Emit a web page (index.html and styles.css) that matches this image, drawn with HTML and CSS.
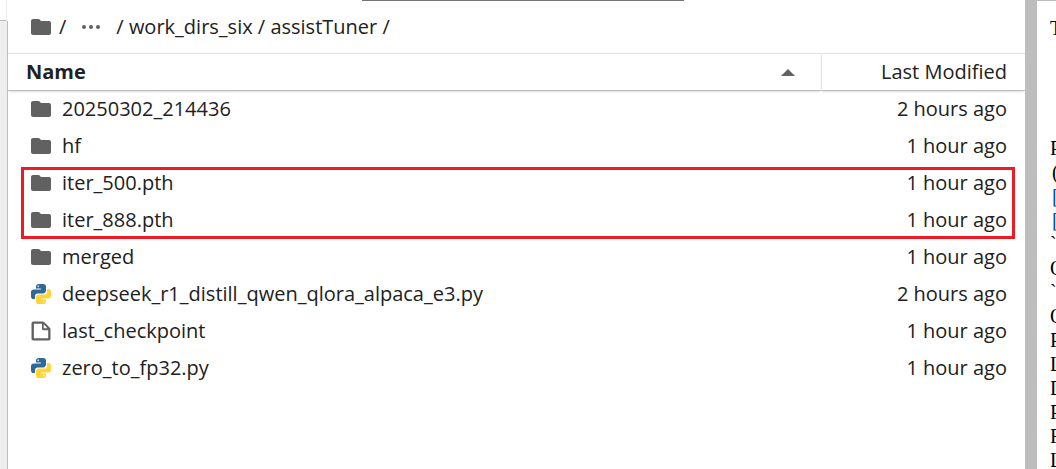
FILE: index.html
```
<!DOCTYPE html>
<html lang="en">
<head>
<meta charset="utf-8">
<title>assistTuner</title>
<link rel="stylesheet" href="styles.css">
</head>
<body>
<svg class="sprite" aria-hidden="true">
  <symbol id="folder" viewBox="0 0 24 24"><path fill="#616161" d="M10 4H4c-1.1 0-1.99.9-1.99 2L2 18c0 1.1.9 2 2 2h16c1.1 0 2-.9 2-2V8c0-1.1-.9-2-2-2h-8l-2-2z"/></symbol>
  <symbol id="file" viewBox="0 0 22 22"><path fill="#616161" d="M19.3 8.2l-5.5-5.5c-.3-.3-.7-.5-1.2-.5H3.9c-.8.1-1.6.9-1.6 1.8v14.1c0 .9.7 1.6 1.6 1.6h14.2c.9 0 1.6-.7 1.6-1.6V9.4c.1-.5-.1-.9-.4-1.2zm-5.8-3.3l3.4 3.6h-3.4V4.9zm3.9 12.7H4.7c-.1 0-.2 0-.2-.2V4.7c0-.2.1-.3.2-.3h7.2v4.4s0 .8.3 1.1c.3.3 1.1.3 1.1.3h4.3v7.2s-.1.2-.2.2z"/></symbol>
  <symbol id="python" viewBox="0 0 24 24">
    <path fill="#306998" d="M9.86 2A2.86 2.86 0 0 0 7 4.86v1.68h4.29c.39 0 .71.57.71.96H4.86A2.86 2.86 0 0 0 2 10.36v3.781a2.86 2.86 0 0 0 2.86 2.86h1.18v-2.68a2.85 2.85 0 0 1 2.85-2.86h5.25c1.58 0 2.86-1.271 2.86-2.851V4.86A2.86 2.86 0 0 0 14.14 2zm-.72 1.61c.4 0 .72.12.72.71s-.32.891-.72.891c-.39 0-.71-.3-.71-.89s.32-.711.71-.711z"/>
    <path fill="#ffd43b" d="M17.959 7v2.68a2.85 2.85 0 0 1-2.85 2.859H9.86A2.85 2.85 0 0 0 7 15.389v3.75a2.86 2.86 0 0 0 2.86 2.86h4.28A2.86 2.86 0 0 0 17 19.14v-1.68h-4.291c-.39 0-.709-.57-.709-.96h7.14A2.86 2.86 0 0 0 22 13.64V9.86A2.86 2.86 0 0 0 19.14 7zm-3.099 11.789c.39 0 .71.3.71.89a.71.71 0 0 1-.71.71c-.4 0-.72-.12-.72-.71s.32-.89.72-.89z"/>
  </symbol>
</svg>
<div class="app">
  <aside class="rail"><div class="rail-top"></div><div class="rail-body"></div></aside>
  <main class="browser">
    <div class="scrollbar"></div>
    <nav class="crumbs" aria-label="Path">
      <a class="crumb-icon" href="#" aria-label="Root"><svg class="icon"><use href="#folder"/></svg></a>
      <span class="root-slash">/</span>
      <button class="more" type="button" aria-label="Show hidden folders"><svg class="dots" viewBox="0 0 20 6"><g fill="#616161"><circle cx="3" cy="3" r="2"/><circle cx="10" cy="3" r="2"/><circle cx="17" cy="3" r="2"/></g></svg></button>
      <span>/ <a href="#">work_dirs_six</a> / <a href="#">assistTuner</a> /</span>
    </nav>
    <div class="listing">
      <table class="files">
        <thead>
          <tr>
            <th class="name-head"><button class="sort" type="button"><span>Name</span><svg class="caret" viewBox="0 0 14 7"><path fill="#616161" d="M0 7 7 0l7 7z"/></svg></button></th>
            <th class="date-head"><button class="sort date" type="button">Last Modified</button></th>
          </tr>
        </thead>
        <tbody>
          <tr><td><a class="entry" href="#"><svg class="icon"><use href="#folder"/></svg>20250302_214436</a></td><td class="date">2 hours ago</td></tr>
          <tr><td><a class="entry" href="#"><svg class="icon"><use href="#folder"/></svg>hf</a></td><td class="date">1 hour ago</td></tr>
          <tr><td><a class="entry" href="#"><svg class="icon"><use href="#folder"/></svg>iter_500.pth</a></td><td class="date">1 hour ago</td></tr>
          <tr><td><a class="entry" href="#"><svg class="icon"><use href="#folder"/></svg>iter_888.pth</a></td><td class="date">1 hour ago</td></tr>
          <tr><td><a class="entry" href="#"><svg class="icon"><use href="#folder"/></svg>merged</a></td><td class="date">1 hour ago</td></tr>
          <tr><td><a class="entry" href="#"><svg class="icon"><use href="#python"/></svg>deepseek_r1_distill_qwen_qlora_alpaca_e3.py</a></td><td class="date">2 hours ago</td></tr>
          <tr><td><a class="entry" href="#"><svg class="icon"><use href="#file"/></svg>last_checkpoint</a></td><td class="date">1 hour ago</td></tr>
          <tr><td><a class="entry" href="#"><svg class="icon"><use href="#python"/></svg>zero_to_fp32.py</a></td><td class="date">1 hour ago</td></tr>
        </tbody>
      </table>
      <div class="highlight"></div>
    </div>
  </main>
  <div class="splitter"></div>
  <section class="output">
<pre class="log">T




P
<span class="mark">(</span>
<span class="mark link">[</span>
<span class="mark link">[</span>
`
O
`
O
P
L
D
P
R
L</pre>
  </section>
</div>
</body>
</html>
```

FILE: styles.css
```
* { box-sizing: border-box; }

body {
  margin: 0;
  background: #fff;
  color: #212121;
  font: 20px/36px "Open Sans", "Noto Sans", sans-serif;
}

a { color: inherit; text-decoration: none; }

button {
  padding: 0;
  border: 0;
  background: none;
  color: inherit;
  font: inherit;
}

.sprite { position: absolute; width: 0; height: 0; }

.app {
  display: flex;
  height: 100vh;
  overflow: hidden;
}

.rail {
  display: flex;
  flex: 0 0 8px;
  flex-direction: column;
}

.rail-top {
  height: 21px;
  margin-right: 1px;
  border-right: 1px solid #eee;
  border-bottom: 1px solid #bdbdbd;
}

.rail-body {
  flex: 1;
  border-right: 1px solid #bdbdbd;
  background: #eee;
}

.browser { flex: 1; min-width: 0; }

.scrollbar {
  width: 322px;
  height: 1px;
  margin-left: 354px;
  background: #757575;
}

.crumbs {
  display: flex;
  align-items: center;
  height: 53px;
  padding-left: 21px;
  border-bottom: 1px solid #e0e0e0;
  white-space: nowrap;
}

.icon { display: block; flex: none; width: 24px; height: 24px; }

.root-slash { margin-left: 6px; }

.more { display: flex; margin: 0 15px; }

.dots { width: 20px; height: 6px; }

.listing { position: relative; }

.files {
  width: 100%;
  border-collapse: separate;
  border-spacing: 0;
  table-layout: fixed;
}

.files th, .files td { height: 37px; padding: 0; }

.files td { vertical-align: top; }

.files thead th {
  border-bottom: 1px solid #bdbdbd;
  box-shadow: 0 2px 2px -1px #ddd;
  font-weight: 400;
}

.date-head { width: 204px; }

.sort {
  display: flex;
  align-items: center;
  justify-content: space-between;
  width: 100%;
  padding: 0 26px 0 18px;
  font-weight: 700;
}

.sort.date {
  justify-content: flex-end;
  height: 34px;
  padding: 0 18px 0 0;
  border-left: 1px solid #e0e0e0;
  font-weight: 400;
}

.caret { width: 14px; height: 7px; }

.entry {
  display: flex;
  align-items: center;
  gap: 9px;
  padding-left: 21px;
}

td.date { padding-right: 18px; text-align: right; }

.highlight {
  position: absolute;
  top: 113px;
  right: 10px;
  left: 13px;
  height: 72px;
  border: 3px solid #ed1c24;
}

.splitter { flex: 0 0 12px; background: #bdbdbd; }

.output {
  flex: 0 0 19px;
  overflow: hidden;
  padding: 15px 0 0 13px;
  border-top: 1px solid #bdbdbd;
}

.log {
  margin: 0;
  color: #000;
  font: 20px/24px "Liberation Serif", serif;
}

.mark { padding-left: 2px; }

.link { color: #0b4a9e; }
```
